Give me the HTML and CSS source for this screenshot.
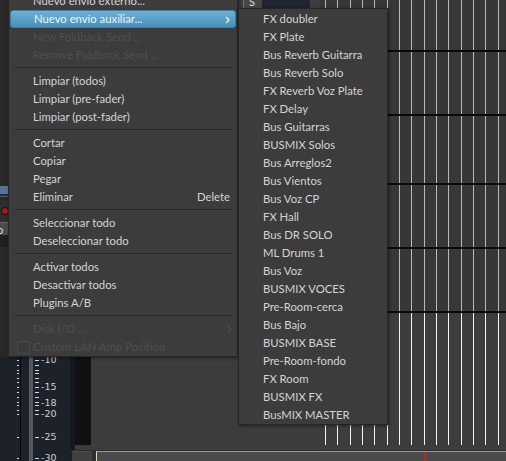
FILE: index.html
```html
<!DOCTYPE html>
<html>
<head>
<meta charset="utf-8">
<link rel="stylesheet" href="styles.css">
</head>
<body>
<div class="app">
  <div class="lcol">
    <div class="ltop">
      <div class="lt-blue"></div>
      <div class="lt-line"></div>
      <div class="lt-rec"><span class="dot"></span></div>
      <div class="lt-btn">o</div>
      <div class="lt-dark"></div>
    </div>
    <div class="scale">
      <div class="bar-black"></div>
      <div class="bar-gray"></div>
      <span class="tk a" style="top:3px"></span><span class="tk b" style="top:3px"></span>
      <span class="tk a" style="top:8px"></span><span class="tk b" style="top:8px"></span>
      <span class="tk a" style="top:13px"></span><span class="tk b" style="top:13px"></span>
      <span class="tk a" style="top:16px"></span><span class="tk b" style="top:16px"></span>
      <span class="tk a" style="top:21px"></span><span class="tk b" style="top:21px"></span>
      <span class="tk a" style="top:25px"></span><span class="tk b" style="top:25px"></span>
      <span class="tk a" style="top:30px"></span><span class="tk b" style="top:30px"></span>
      <span class="tk a" style="top:35px"></span><span class="tk b" style="top:35px"></span>
      <span class="tk a" style="top:40px"></span><span class="tk b" style="top:40px"></span>
      <span class="tk a" style="top:45px"></span><span class="tk b" style="top:45px"></span>
      <span class="tk a" style="top:48px"></span><span class="tk b" style="top:48px"></span>
      <span class="tk a" style="top:53px"></span><span class="tk b" style="top:53px"></span>
      <span class="tk a" style="top:57px"></span><span class="tk b" style="top:57px"></span>
      <span class="tk a" style="top:80px"></span><span class="tk b" style="top:80px"></span>
      <span class="tk a" style="top:101px"></span><span class="tk b" style="top:101px"></span>
      <span class="lbl" style="top:-3px">-10</span>
      <span class="lbl" style="top:24px">-15</span>
      <span class="lbl" style="top:40px">-18</span>
      <span class="lbl" style="top:51px">-20</span>
      <span class="lbl" style="top:74px">-25</span>
      <span class="lbl" style="top:95px">-30</span>
    </div>
  </div>
  <div class="rest">
    <div class="upper">
      <div class="gapcol"></div>
      <div class="blackcol"><div class="bc-top"></div><div class="bc-meter"></div></div>
      <div class="mid">
        <div class="midtop"><span class="sbtn">S</span><span class="navy"></span></div>
      </div>
      <div class="grid">
        <div class="hl" style="top:50px"></div>
        <div class="hl" style="top:114px"></div>
        <div class="hl" style="top:183px"></div>
        <div class="hl" style="top:247px"></div>
        <div class="hl" style="top:311px"></div>
        <div class="vlines">
          <i></i><i></i><i></i><i></i><i></i><i></i><i></i><i></i><i></i><i></i><i></i><i></i><i></i><i></i><i></i>
        </div>
      </div>
    </div>
    <div class="bottom">
      <div class="bt-pad"></div>
      <div class="bt-box"></div>
      <div class="bt-gap"></div>
      <div class="bt-strip"><span class="playhead"></span></div>
    </div>
  </div>
</div>

<div class="menu main">
  <div class="item">Nuevo envío externo...</div>
  <div class="item hi">Nuevo envío auxiliar...<svg class="arrow" width="5" height="8" viewBox="0 0 5 8"><path d="M1 1 L4 4 L1 7" fill="none" stroke="#e8f4fa" stroke-width="1.3"/></svg></div>
  <div class="item dis">New Foldback Send ...</div>
  <div class="item dis">Remove Foldback Send ...</div>
  <div class="sep"></div>
  <div class="item">Limpiar (todos)</div>
  <div class="item">Limpiar (pre-fader)</div>
  <div class="item">Limpiar (post-fader)</div>
  <div class="sep"></div>
  <div class="item">Cortar</div>
  <div class="item">Copiar</div>
  <div class="item">Pegar</div>
  <div class="item">Eliminar<span class="key">Delete</span></div>
  <div class="sep"></div>
  <div class="item">Seleccionar todo</div>
  <div class="item">Deseleccionar todo</div>
  <div class="sep"></div>
  <div class="item">Activar todos</div>
  <div class="item">Desactivar todos</div>
  <div class="item">Plugins A/B</div>
  <div class="sep"></div>
  <div class="item dis">Disk I/O ...<svg class="arrow" width="5" height="8" viewBox="0 0 5 8"><path d="M1 1 L4 4 L1 7" fill="none" stroke="#4e4e4e" stroke-width="1.3"/></svg></div>
  <div class="item dis"><span class="chk"></span>Custom LAN Amp Position</div>
</div>

<div class="menu sub">
  <div class="item">FX doubler</div>
  <div class="item">FX Plate</div>
  <div class="item">Bus Reverb Guitarra</div>
  <div class="item">Bus Reverb Solo</div>
  <div class="item">FX Reverb Voz Plate</div>
  <div class="item">FX Delay</div>
  <div class="item">Bus Guitarras</div>
  <div class="item">BUSMIX Solos</div>
  <div class="item">Bus Arreglos2</div>
  <div class="item">Bus Vientos</div>
  <div class="item">Bus Voz CP</div>
  <div class="item">FX Hall</div>
  <div class="item">Bus DR SOLO</div>
  <div class="item">ML Drums 1</div>
  <div class="item">Bus Voz</div>
  <div class="item">BUSMIX VOCES</div>
  <div class="item">Pre-Room-cerca</div>
  <div class="item">Bus Bajo</div>
  <div class="item">BUSMIX BASE</div>
  <div class="item">Pre-Room-fondo</div>
  <div class="item">FX Room</div>
  <div class="item">BUSMIX FX</div>
  <div class="item">BusMIX MASTER</div>
</div>
</body>
</html>
```
FILE: styles.css
```css
* { box-sizing: border-box; }
html, body { margin: 0; padding: 0; }
body {
  width: 506px;
  height: 461px;
  overflow: hidden;
  position: relative;
  background: #3c3c3c;
  font-family: "Lato", "Noto Sans", sans-serif;
}
.app {
  display: flex;
  width: 506px;
  height: 461px;
}
/* left column */
.lcol {
  width: 70px;
  height: 461px;
  background: #1d2129;
  display: flex;
  flex-direction: column;
}
.ltop {
  height: 357px;
  background: #282828;
  display: flex;
  flex-direction: column;
  padding-top: 186px;
}
.lt-blue { height: 8px; background: #56749a; }
.lt-line { height: 3px; background: #2a2a2a; border-bottom: 1px solid #5a5a5a; margin-bottom: 3px; }
.lt-rec { height: 22px; background: #2e2e2e; display: flex; align-items: center; padding-left: 1px; }
.dot { width: 8px; height: 8px; border-radius: 50%; background: #b01818; border: 1px solid #111; }
.lt-btn {
  height: 13px;
  background: #4c4c4c;
  color: #dcdcdc;
  font-size: 11px;
  line-height: 13px;
  text-indent: -3px;
  border-top: 1px solid #666;
}
.lt-dark { height: 12px; background: #1f1f1f; }
.scale {
  flex: 1;
  position: relative;
  background: #1d2129;
}
.bar-black { position: absolute; left: 20px; top: 0; bottom: 0; width: 1px; background: #050505; }
.bar-gray { position: absolute; left: 29px; top: 0; bottom: 0; width: 4px; background: #55585c; }
.tk { position: absolute; height: 1px; background: #d8d8d8; }
.tk.a { left: 17px; width: 2px; }
.tk.b { left: 35px; width: 4px; }
.lbl {
  position: absolute;
  left: 41px;
  font-family: "DejaVu Sans", sans-serif;
  font-size: 9.5px;
  line-height: 11px;
  color: #cfcfcf;
}
/* right part */
.rest {
  flex: 1;
  display: flex;
  flex-direction: column;
}
.upper {
  height: 450px;
  display: flex;
}
.gapcol { width: 5px; background: #151820; }
.blackcol { width: 16px; display: flex; flex-direction: column; }
.bc-top { height: 357px; background: #2a2a2a; }
.bc-meter { height: 88px; background: #111111; }
.mid {
  flex: 1;
  background: #3c3c3c;
}
.midtop {
  height: 8px;
  display: flex;
  padding-left: 152px;
}
.sbtn {
  width: 19px;
  height: 8px;
  background: #454545;
  border-left: 1px solid #777;
  color: #ddd;
  font-size: 11px;
  line-height: 4px;
  padding-left: 5px;
}
.navy { width: 48px; height: 8px; background: #1f2430; }
.grid {
  width: 186px;
  position: relative;
  background: linear-gradient(to bottom, #353739 0, #353739 312px, #3d3d3d 312px);
  padding: 0 7px 0 5px;
}
.hl {
  position: absolute;
  left: 0;
  right: 0;
  height: 2px;
  background: #080808;
  z-index: 1;
}
.vlines {
  display: flex;
  justify-content: space-between;
  height: 445px;
}
.vlines i {
  width: 1px;
  height: 445px;
  background: linear-gradient(to bottom, #b9b9b9 0, #b9b9b9 312px, #f2f2f2 312px);
}
.bottom {
  height: 11px;
  display: flex;
  background: #2b2b2b;
  padding-top: 1px;
}
.bt-pad { width: 2px; background: #1d2129; }
.bt-box { width: 20px; background: #414141; border-top: 1px solid #4d4d4d; border-radius: 2px 2px 0 0; }
.bt-gap { width: 4px; background: #2e2e2e; }
.bt-strip {
  flex: 1;
  position: relative;
  background: #4b4b4b;
  border-top: 1px solid #9a9a9a;
  border-left: 1px solid #e6dd9c;
}
.playhead {
  position: absolute;
  left: 327px;
  top: 0;
  bottom: 0;
  width: 2px;
  background: #c81e1e;
}
/* menus */
.menu {
  position: absolute;
  background: #3c3c3c;
  border: 1px solid #262626;
  box-shadow: 1px 1px 3px rgba(0, 0, 0, 0.45);
  font-size: 11.3px;
  color: #d4d4d4;
  z-index: 5;
}
.main {
  left: 8px;
  top: -10px;
  width: 230px;
  padding: 1px 0 0 0;
}
.sub {
  left: 238px;
  top: 8px;
  width: 150px;
  padding: 1px 0 0 0;
}
.item {
  height: 18px;
  line-height: 18px;
  padding-left: 24px;
  padding-right: 7px;
  display: flex;
  align-items: center;
  white-space: nowrap;
  position: relative;
}
.item.hi {
  margin: 0 1px;
  padding-left: 23px;
  border-radius: 3px;
  background: linear-gradient(to bottom, #6cb2d6 0%, #5aa0c8 50%, #4b8fb9 100%);
  border: 1px solid #3e7ca3;
  color: #eef6fa;
}
.item.dis { color: #4f4f4f; }
.arrow { position: absolute; right: 5px; top: 5px; }
.key { margin-left: auto; }
.sep {
  height: 8px;
  padding: 3px 5px 0 6px;
}
.sep::before {
  content: "";
  display: block;
  height: 1px;
  background: #282828;
}
.chk {
  position: absolute;
  left: 8px;
  top: 3px;
  width: 13px;
  height: 13px;
  border: 1px solid #4a4a4a;
  border-radius: 1px;
  background: #3a3a3a;
}
```
